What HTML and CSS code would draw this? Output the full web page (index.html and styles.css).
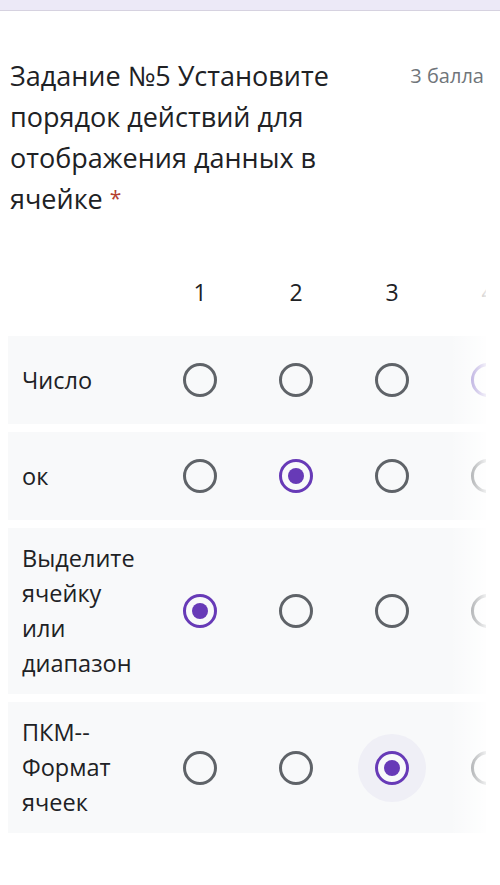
FILE: index.html
```html
<!DOCTYPE html>
<html lang="ru">
<head>
    <meta charset="UTF-8">
    <meta name="viewport" content="width=device-width, initial-scale=1.0">
    <title>Задание №5</title>
    <link rel="stylesheet" href="styles.css">
</head>
<body>
    <div class="topbar"></div>

    <div class="question">
        <div class="question-head">
            <div class="question-title">Задание №5 Установите порядок действий для отображения данных в ячейке <span class="required">*</span></div>
            <div class="points">3 балла</div>
        </div>

        <div class="grid-wrap">
            <div class="grid">
                <div class="grid-head">
                    <div class="label-cell"></div>
                    <div class="col-num">1</div>
                    <div class="col-num">2</div>
                    <div class="col-num">3</div>
                    <div class="col-num">4</div>
                </div>

                <div class="grid-row">
                    <div class="label-cell">Число</div>
                    <div class="radio-cell"><span class="radio"></span></div>
                    <div class="radio-cell"><span class="radio"></span></div>
                    <div class="radio-cell"><span class="radio"></span></div>
                    <div class="radio-cell"><span class="radio focus"></span></div>
                </div>

                <div class="grid-row">
                    <div class="label-cell">ок</div>
                    <div class="radio-cell"><span class="radio"></span></div>
                    <div class="radio-cell"><span class="radio checked"></span></div>
                    <div class="radio-cell"><span class="radio"></span></div>
                    <div class="radio-cell"><span class="radio"></span></div>
                </div>

                <div class="grid-row">
                    <div class="label-cell">Выделите ячейку или диапазон</div>
                    <div class="radio-cell"><span class="radio checked"></span></div>
                    <div class="radio-cell"><span class="radio"></span></div>
                    <div class="radio-cell"><span class="radio"></span></div>
                    <div class="radio-cell"><span class="radio"></span></div>
                </div>

                <div class="grid-row">
                    <div class="label-cell">ПКМ--Формат ячеек</div>
                    <div class="radio-cell"><span class="radio"></span></div>
                    <div class="radio-cell"><span class="radio"></span></div>
                    <div class="radio-cell hover"><span class="radio checked"></span></div>
                    <div class="radio-cell"><span class="radio"></span></div>
                </div>
            </div>
            <div class="fade"></div>
        </div>
    </div>
</body>
</html>
```

FILE: styles.css
```css
body {
    margin: 0;
    background-color: #fff;
    font-family: "Open Sans", Roboto, Arial, sans-serif;
    color: #202124;
}

.topbar {
    height: 10px;
    background-color: #ece9f7;
    border-bottom: 1px solid #d6d2e0;
}

.question {
    padding: 44px 0 0 8px;
}

.question-head {
    display: flex;
    justify-content: space-between;
    align-items: flex-start;
    padding-left: 2px;
    padding-right: 16px;
}

.question-title {
    width: 360px;
    font-size: 27px;
    line-height: 41px;
}

.required {
    color: #b5412f;
    font-size: 21px;
    vertical-align: 3px;
}

.points {
    font-size: 20px;
    line-height: 41px;
    color: #70757a;
}

.grid-wrap {
    position: relative;
    width: 478px;
    margin-top: 57px;
    overflow: hidden;
}

.grid {
    display: flex;
    flex-direction: column;
    gap: 8px;
    width: 528px;
}

.grid-head,
.grid-row {
    display: grid;
    grid-template-columns: 144px repeat(4, 96px);
    align-items: center;
}

.grid-head {
    height: 32px;
    margin-bottom: 20px;
}

.col-num {
    text-align: center;
    font-size: 23px;
}

.grid-row {
    background-color: #f8f9fa;
    padding: 13px 0;
    min-height: 62px;
}

.label-cell {
    padding-left: 14px;
    padding-right: 11px;
    font-size: 23.5px;
    line-height: 35px;
}

.radio-cell {
    display: flex;
    justify-content: center;
    align-items: center;
    height: 62px;
}

.radio-cell.hover .radio {
    box-shadow: 0 0 0 17px #efeff6;
}

.radio {
    box-sizing: border-box;
    width: 34px;
    height: 34px;
    border: 3px solid #5f6368;
    border-radius: 50%;
    display: flex;
    justify-content: center;
    align-items: center;
}

.radio.focus {
    border-color: #7e66c4;
}

.radio.checked {
    border-color: #673ab7;
}

.radio.checked::after {
    content: "";
    width: 16px;
    height: 16px;
    border-radius: 50%;
    background-color: #673ab7;
}

.fade {
    position: absolute;
    top: 0;
    right: 0;
    width: 36px;
    height: 100%;
    background: linear-gradient(to right, rgba(255, 255, 255, 0), rgba(255, 255, 255, 0.5) 55%, rgba(255, 255, 255, 0.9));
}
```
